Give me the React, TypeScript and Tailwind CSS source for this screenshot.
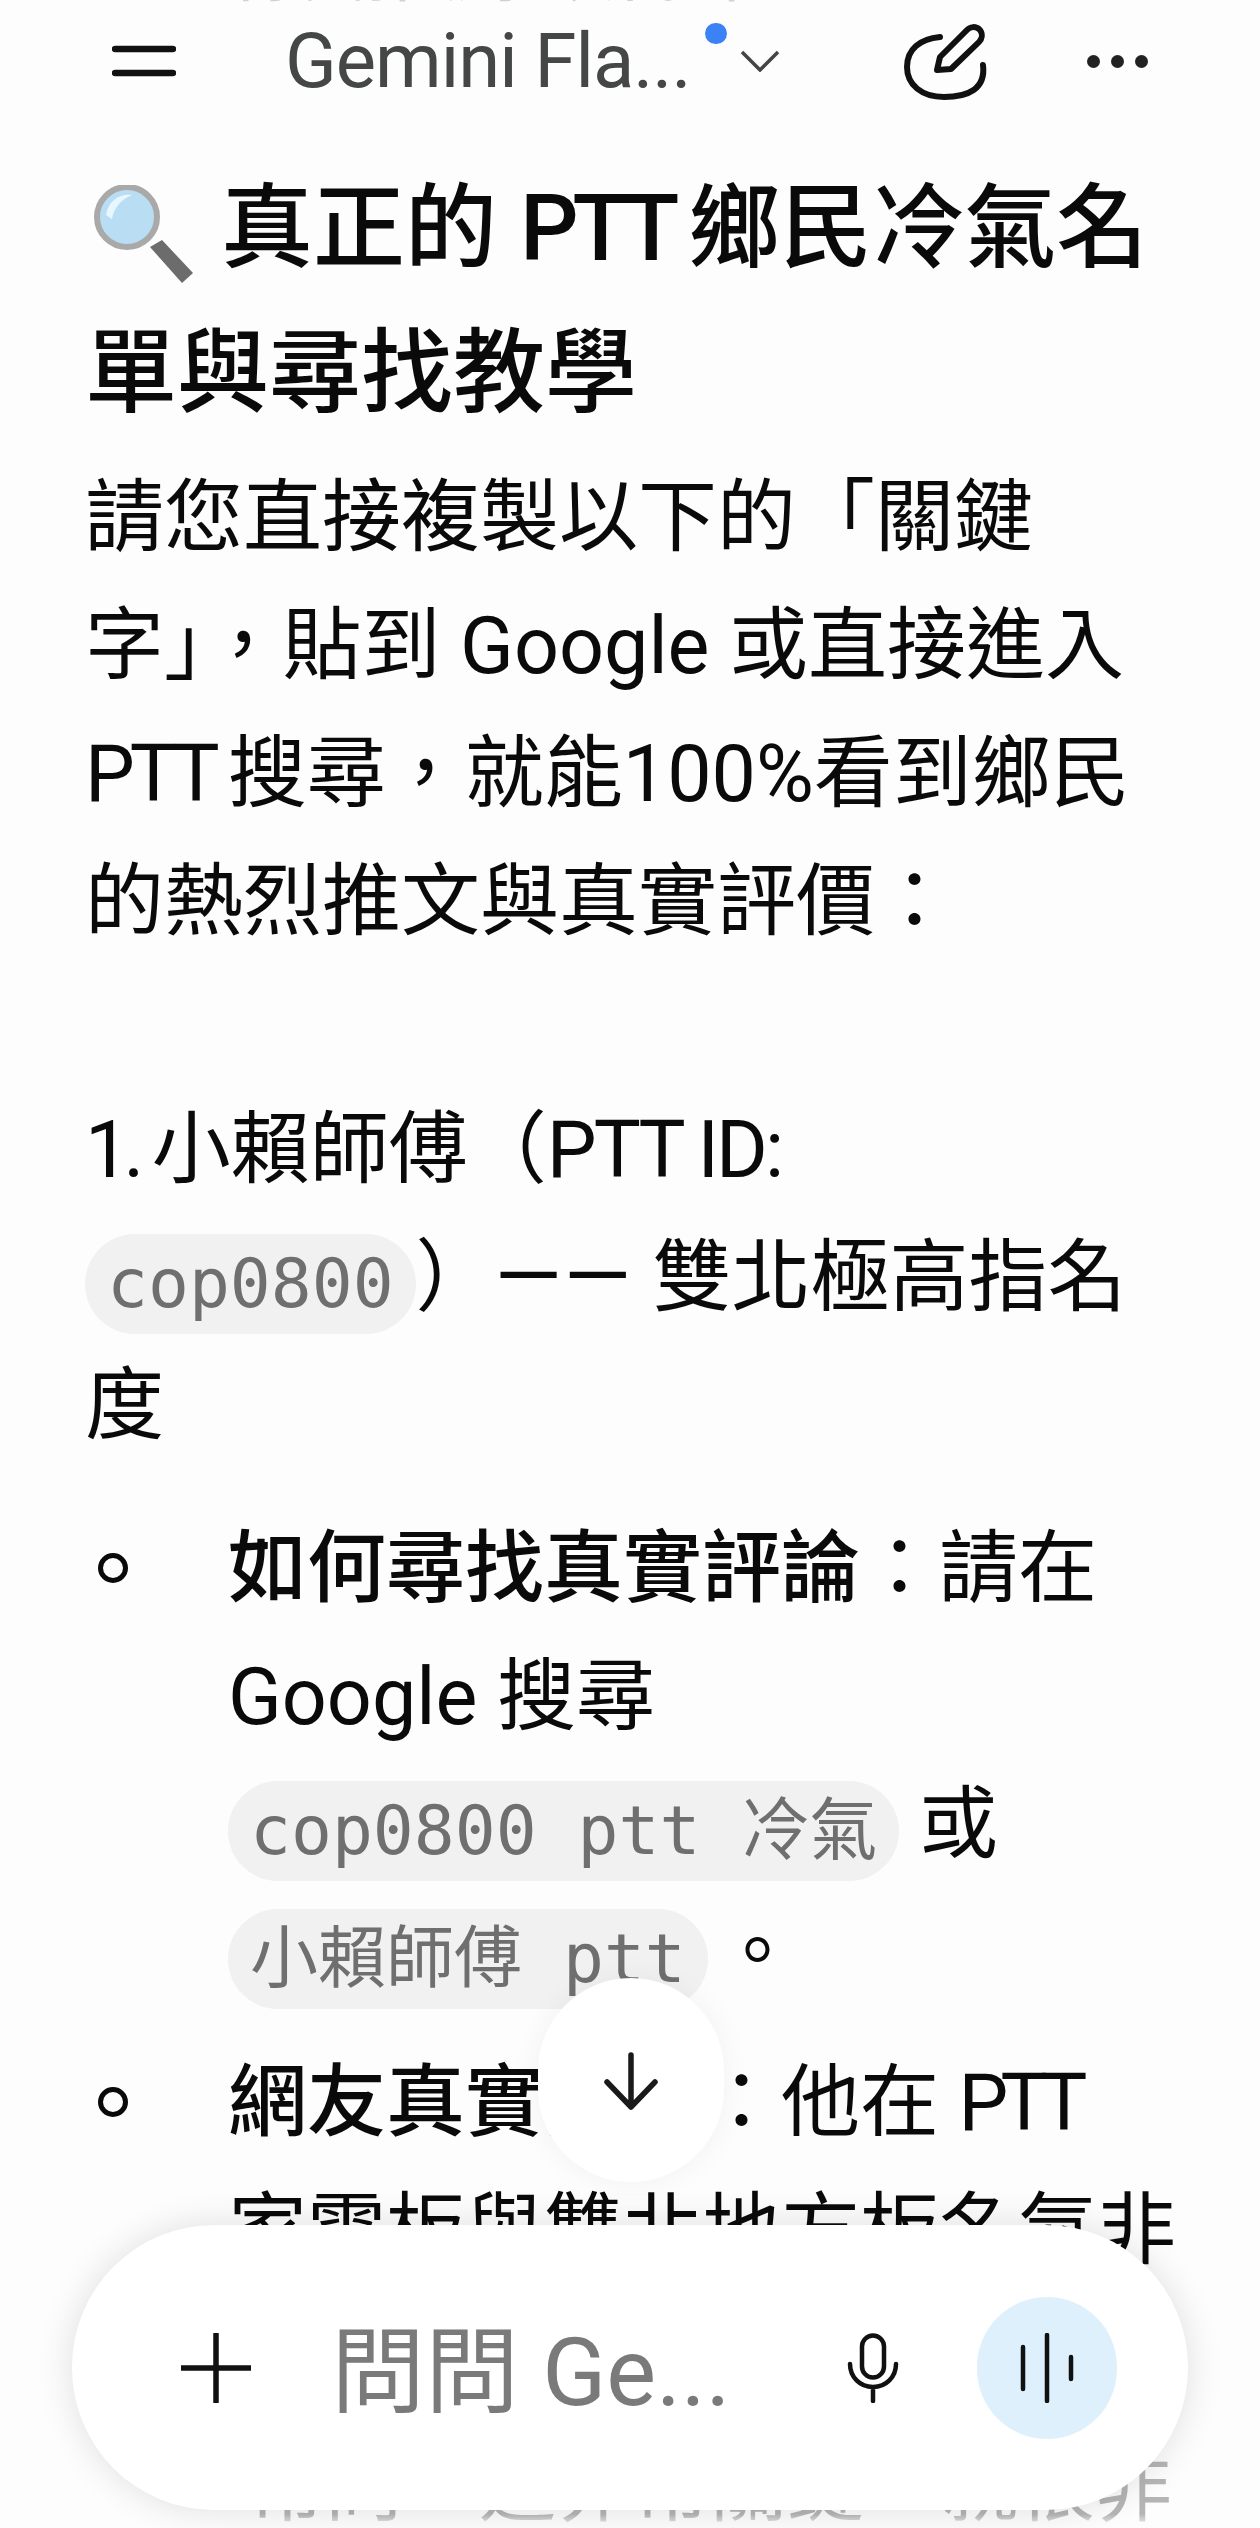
function Code({ children }: { children: React.ReactNode }) {
  return (
    <span className="inline-block h-[100px] rounded-[50px] bg-[#f2f1f2] px-[22px] align-middle font-['DejaVu_Sans_Mono','Noto_Sans_CJK_TC',monospace] text-[68px] leading-[100px] text-[#6f6f6f]">
      {children}
    </span>
  );
}

function Magnifier() {
  return (
    <svg viewBox="0 0 101 98" className="h-[98px] w-[101px]">
      <path d="M58 62 L70 55 L101 88 L90 98 Z" fill="#6c6c6c" />
      <circle cx="35" cy="32" r="30" fill="#b9def4" stroke="#a9a9a9" strokeWidth="6" />
      <path d="M14 30 C16 16 28 8 40 10 C30 14 22 22 20 34 Z" fill="#e8f6fd" />
    </svg>
  );
}

export default function App() {
  return (
    <div className="relative h-[2528px] w-[1260px] overflow-hidden bg-[#fdfdfd] font-['Roboto','Noto_Sans_CJK_TC',sans-serif] text-[#0a0a0a]">
      <div className="absolute left-[210px] top-[-70px] text-[78px] leading-[78px] text-[#d2d2d2]">
        網友推薦冷氣師
      </div>

      <header className="relative flex h-[120px] items-center pl-[112px] pr-[112px] pt-[2px]">
        <svg viewBox="0 0 64 40" className="h-[40px] w-[64px]">
          <path d="M3 8h58M3 32h58" stroke="#111" strokeWidth="6.5" strokeLinecap="round" />
        </svg>
        <span className="ml-[109px] text-[76px] leading-none tracking-[-1px] text-[#444746]">Gemini Fla...</span>
        <span className="absolute left-[705px] top-[23px] h-[21px] w-[22px] rounded-full bg-[#3b82f6]" />
        <svg viewBox="0 0 40 22" className="ml-[50px] h-[22px] w-[40px]">
          <path d="M2 2l18 18L38 2" fill="none" stroke="#444" strokeWidth="3.5" />
        </svg>
        <svg viewBox="0 0 85 77" className="ml-[124px] h-[77px] w-[85px]">
          <path
            d="M36 14C16 16 3 26 3 44c0 18 15 30 37 30 24 0 42-8 39-32M33 47l3-13L62 8c4-5 10-5 14-1 3 4 2 9-1 12L47 46Z"
            fill="none"
            stroke="#111"
            strokeWidth="6"
            strokeLinecap="round"
            strokeLinejoin="round"
          />
        </svg>
        <div className="ml-auto flex gap-[11px]">
          <span className="h-[13px] w-[13px] rounded-full bg-[#222]" />
          <span className="h-[13px] w-[13px] rounded-full bg-[#222]" />
          <span className="h-[13px] w-[13px] rounded-full bg-[#222]" />
        </div>
      </header>

      <main className="pl-[85px] pr-[60px] pt-[36px]">
        <h1 className="text-[92px] font-medium leading-[145px]">
          <span className="ml-[7px] mr-[28px] inline-block align-[-23px]">
            <Magnifier />
          </span>
          真正的 <span className="tracking-[-6px]">PTT </span>鄉民冷氣名
          <br />
          單與尋找教學
        </h1>
        <div className="mt-[8px] text-[79px] leading-[128px]">
          <p>
            請您直接複製以下的「關鍵
            <br />
            字」，貼到 Google 或直接進入
            <br />
            <span className="tracking-[-5px]">PTT </span>搜尋，就能100%看到鄉民
            <br />
            的熱烈推文與真實評價：
          </p>
          <p className="mt-[120px]">
            <span className="tracking-[-6px]">1. </span>小賴師傅（<span className="tracking-[-3px]">PTT ID:</span>
            <br />
            <Code>cop0800</Code>）<span className="text-[86px] leading-[0] tracking-[2px]">——</span> 雙北極高指名
            <br />度
          </p>
          <ul className="mt-[35px]">
            <li className="relative pl-[143px]">
              <span className="absolute left-[13px] top-[48px] h-[30px] w-[30px] rounded-full border-[5px] border-[#0a0a0a]" />
              <b className="font-medium">如何尋找真實評論</b>：請在
              <br />
              Google 搜尋
              <br />
              <Code>cop0800 ptt 冷氣</Code> 或
              <br />
              <Code>小賴師傅 ptt</Code>
              <span className="ml-[10px]">。</span>
            </li>
            <li className="relative mt-[22px] pl-[143px]">
              <span className="absolute left-[13px] top-[48px] h-[30px] w-[30px] rounded-full border-[5px] border-[#0a0a0a]" />
              <b className="font-medium">網友真實評價</b>：他在 <span className="tracking-[-8px]">PTT</span>
              <br />
              家電板與雙北地方板名氣非
            </li>
          </ul>
        </div>
      </main>

      <div className="absolute left-[248px] top-[2439px] whitespace-nowrap text-[77px] leading-[100px] text-[#b5b5b5]">
        常問，這非常關鍵，就很非
      </div>
      <div className="absolute bottom-0 left-0 h-[14px] w-full bg-gradient-to-t from-[#fdfdfd] to-transparent" />

      <div className="absolute left-[538px] top-[1978px] flex h-[204px] w-[186px] justify-center rounded-full bg-white pt-[74px] shadow-[0_0_30px_rgba(0,0,0,0.05)]">
        <svg viewBox="0 0 56 58" className="h-[58px] w-[56px]">
          <path d="M28 3v52M4 30l24 25 24-25" fill="none" stroke="#1a1a1a" strokeWidth="5.5" strokeLinecap="round" strokeLinejoin="round" />
        </svg>
      </div>

      <div className="absolute left-[72px] top-[2225px] flex h-[285px] w-[1116px] items-center rounded-[142px] bg-white pl-[109px] pr-[71px] shadow-[0_0_36px_rgba(0,0,0,0.12)]">
        <svg viewBox="0 0 70 70" className="h-[70px] w-[70px]">
          <path d="M35 1v68M1 35h68" stroke="#111" strokeWidth="5.5" strokeLinecap="round" />
        </svg>
        <span className="ml-[80px] pt-[11px] text-[94px] leading-none text-[#7a7a7a]">問問 Ge...</span>
        <svg viewBox="0 0 52 70" className="ml-auto h-[70px] w-[52px]">
          <rect x="15" y="2.5" width="22" height="42" rx="11" fill="none" stroke="#111" strokeWidth="4.5" />
          <path d="M3 31c0 13 10 23 23 23s23-10 23-23M26 54v14" fill="none" stroke="#111" strokeWidth="4.5" strokeLinecap="round" />
        </svg>
        <div className="ml-[78px] flex h-[142px] w-[140px] items-center justify-center rounded-full bg-[#dff0fd]">
          <svg viewBox="0 0 56 70" className="h-[70px] w-[56px]">
            <path d="M4 14v42M28 2v66M52 24v22" stroke="#111" strokeWidth="4.5" strokeLinecap="round" />
          </svg>
        </div>
      </div>
    </div>
  );
}
